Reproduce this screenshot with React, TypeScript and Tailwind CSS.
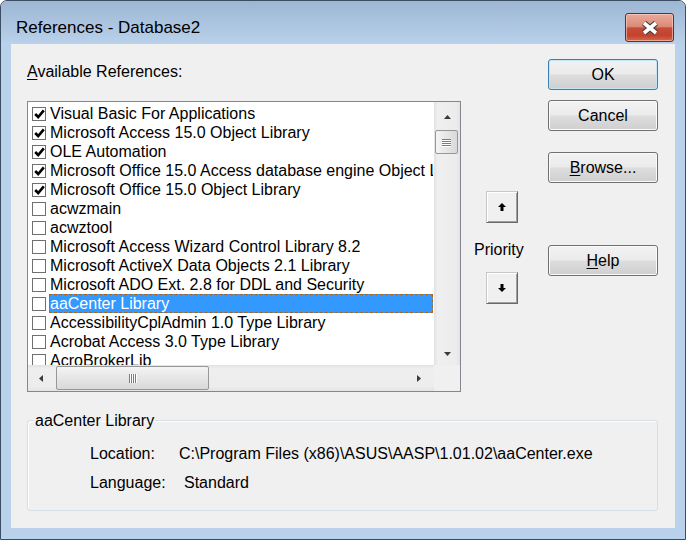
import React from 'react';

type Item = { label: string; checked: boolean; selected?: boolean };

const items: Item[] = [
  { label: 'Visual Basic For Applications', checked: true },
  { label: 'Microsoft Access 15.0 Object Library', checked: true },
  { label: 'OLE Automation', checked: true },
  { label: 'Microsoft Office 15.0 Access database engine Object Library', checked: true },
  { label: 'Microsoft Office 15.0 Object Library', checked: true },
  { label: 'acwzmain', checked: false },
  { label: 'acwztool', checked: false },
  { label: 'Microsoft Access Wizard Control Library 8.2', checked: false },
  { label: 'Microsoft ActiveX Data Objects 2.1 Library', checked: false },
  { label: 'Microsoft ADO Ext. 2.8 for DDL and Security', checked: false },
  { label: 'aaCenter Library', checked: false, selected: true },
  { label: 'AccessibilityCplAdmin 1.0 Type Library', checked: false },
  { label: 'Acrobat Access 3.0 Type Library', checked: false },
  { label: 'AcroBrokerLib', checked: false },
];

function Arrow({ dir }: { dir: 'up' | 'down' | 'left' | 'right' }) {
  const pts = {
    up: '0,4 3.5,0 7,4',
    down: '0,0 7,0 3.5,4',
    left: '4,0 4,7 0,3.5',
    right: '0,0 4,3.5 0,7',
  }[dir];
  const vertical = dir === 'up' || dir === 'down';
  return (
    <svg width={vertical ? 7 : 4} height={vertical ? 4 : 7} viewBox={vertical ? '0 0 7 4' : '0 0 4 7'}>
      <polygon points={pts} fill="#3a3a3a" />
    </svg>
  );
}

function CheckBox({ checked }: { checked: boolean }) {
  return (
    <div className="w-[14px] h-[14px] shrink-0 border border-[#6f6f6f] bg-white flex items-center justify-center">
      {checked && (
        <svg width="11" height="10" viewBox="0 0 11 10">
          <path d="M1.2 5 L4.2 8 L9.8 1.3" stroke="#000" strokeWidth="2.6" fill="none" />
        </svg>
      )}
    </div>
  );
}

function WinButton({ children, primary }: { children: React.ReactNode; primary?: boolean }) {
  return (
    <div
      className={
        'h-[31px] w-[110px] rounded-[3px] border flex items-center justify-center text-black ' +
        'bg-[linear-gradient(#f2f2f2,#ebebeb_48%,#dddddd_52%,#cfcfcf)] ' +
        (primary
          ? 'border-[#3c7fb1] shadow-[inset_0_0_0_1px_#c4e5f6]'
          : 'border-[#707070] shadow-[inset_0_0_0_1px_#fbfbfb]')
      }
    >
      {children}
    </div>
  );
}

function PriorityButton({ dir }: { dir: 'up' | 'down' }) {
  return (
    <div className="w-[32px] h-[32px] bg-[#f0f0f0] border border-t-[#c8c8c8] border-l-[#c8c8c8] border-r-[#696969] border-b-[#696969] shadow-[inset_1px_1px_0_#ffffff,inset_-1px_-1px_0_#a0a0a0] flex items-center justify-center">
      <svg width="8" height="8" viewBox="0 0 8 8">
        {dir === 'up' ? (
          <polygon points="4,0 8,4 5.5,4 5.5,8 2.5,8 2.5,4 0,4" fill="#000" />
        ) : (
          <polygon points="2.5,0 5.5,0 5.5,4 8,4 4,8 0,4 2.5,4" fill="#000" />
        )}
      </svg>
    </div>
  );
}

function Gripper({ vertical }: { vertical: boolean }) {
  return vertical ? (
    <div className="flex flex-col gap-[1px]">
      {[0, 1, 2, 3].map((i) => (
        <div key={i} className="w-[9px] h-[1px] bg-[#7d7d7d] shadow-[0_1px_0_#ffffff]" />
      ))}
    </div>
  ) : (
    <div className="flex flex-row gap-[1px]">
      {[0, 1, 2, 3].map((i) => (
        <div key={i} className="h-[9px] w-[1px] bg-[#7d7d7d] shadow-[1px_0_0_#ffffff]" />
      ))}
    </div>
  );
}

export default function App() {
  return (
    <div className="w-[686px] h-[540px] flex flex-col rounded-t-[7px] border border-[#3b4d62] bg-[#b9d1ea] overflow-hidden font-['Liberation_Sans',Arial,sans-serif] text-[16px] leading-[19px] text-black">
      {/* title bar */}
      <div className="h-[43px] shrink-0 flex items-start bg-[linear-gradient(#9db6d3,#b9d1ea)]">
        <div className="ml-[15px] mt-[16px] h-[22px] leading-[22px] text-[17px] text-black">References - Database2</div>
        <div className="ml-auto mr-[11px] mt-[12px] w-[49px] h-[29px] rounded-[3px] border border-[#6b2b24] bg-[linear-gradient(#e9aa9b,#db8a78_46%,#c54c37_52%,#c3432d_80%,#d56a50)] shadow-[inset_0_0_0_1px_rgba(255,220,210,0.55)] flex items-center justify-center">
          <svg width="20" height="16" viewBox="0 0 20 16">
            <path d="M4 3 L16 13 M16 3 L4 13" stroke="#3e3e3e" strokeWidth="6" />
            <path d="M4 3 L16 13 M16 3 L4 13" stroke="#ffffff" strokeWidth="3.6" />
          </svg>
        </div>
      </div>

      {/* client */}
      <div className="mx-[10px] h-[484px] bg-[#f0f0f0] flex flex-col pl-[16px] pr-[17px]">
        <div className="flex flex-row">
          {/* list column */}
          <div className="w-[434px] flex flex-col">
            <div className="mt-[18px] h-[19px]">
              <span className="underline underline-offset-2">A</span>vailable References:
            </div>
            <div className="mt-[20px] h-[291px] border border-[#828790] bg-white grid grid-cols-[1fr_26px] grid-rows-[1fr_26px]">
              <div className="overflow-hidden pt-[2px]">
                {items.map((it) => (
                  <div key={it.label} className="h-[19px] flex items-center pl-[4px]">
                    <CheckBox checked={it.checked} />
                    <div
                      className={
                        'ml-[3px] mr-[1px] flex-1 min-w-0 h-[19px] whitespace-nowrap overflow-hidden ' +
                        (it.selected
                          ? 'bg-[#3399ff] text-white border border-dashed border-[#b5600c] leading-[17px]'
                          : 'pl-[1px]')
                      }
                    >
                      {it.label}
                    </div>
                  </div>
                ))}
              </div>

              {/* vertical scrollbar */}
              <div className="flex flex-col bg-[linear-gradient(90deg,#e2e2e2,#efefef_15%,#ececec_85%,#e4e4e4)]">
                <div className="h-[26px] flex items-center justify-center pt-[4px]">
                  <Arrow dir="up" />
                </div>
                <div className="mt-[2px] ml-[1px] w-[23px] h-[24px] rounded-[2px] border border-[#979797] bg-[linear-gradient(90deg,#f4f4f4,#e6e6e6_50%,#d9d9d9)] flex items-center justify-center">
                  <Gripper vertical />
                </div>
                <div className="flex-1" />
                <div className="h-[26px] flex items-center justify-center pt-[3px]">
                  <Arrow dir="down" />
                </div>
              </div>

              {/* horizontal scrollbar */}
              <div className="flex flex-row bg-[linear-gradient(#e2e2e2,#efefef_15%,#ececec_85%,#e4e4e4)]">
                <div className="w-[26px] flex items-center justify-center">
                  <Arrow dir="left" />
                </div>
                <div className="ml-[2px] my-[1px] w-[153px] rounded-[2px] border border-[#979797] bg-[linear-gradient(#f4f4f4,#e6e6e6_50%,#d9d9d9)] flex items-center justify-center">
                  <Gripper vertical={false} />
                </div>
                <div className="flex-1" />
                <div className="w-[26px] flex items-center justify-center pr-[4px]">
                  <Arrow dir="right" />
                </div>
              </div>
              <div className="bg-[#f0f0f0]" />
            </div>
          </div>

          {/* priority column */}
          <div className="w-[87px] flex flex-col pt-[147px]">
            <div className="ml-[25px]">
              <PriorityButton dir="up" />
            </div>
            <div className="ml-[13px] mt-[17px] h-[19px]">Priority</div>
            <div className="ml-[25px] mt-[13px]">
              <PriorityButton dir="down" />
            </div>
          </div>

          {/* buttons column */}
          <div className="w-[110px] flex flex-col pt-[15px]">
            <WinButton primary>OK</WinButton>
            <div className="mt-[10px]">
              <WinButton>Cancel</WinButton>
            </div>
            <div className="mt-[21px]">
              <WinButton>
                <span>
                  <span className="underline underline-offset-2">B</span>rowse...
                </span>
              </WinButton>
            </div>
            <div className="mt-[62px]">
              <WinButton>
                <span>
                  <span className="underline underline-offset-2">H</span>elp
                </span>
              </WinButton>
            </div>
          </div>
        </div>

        {/* group box */}
        <fieldset className="mt-[19px] h-[100px] rounded-[3px] border border-[#d5dfe5] shadow-[inset_1px_1px_0_#ffffff]">
          <legend className="ml-[6px] px-[1px] h-[19px]">aaCenter Library</legend>
          <div className="pl-[62px] pt-[14px] flex flex-col gap-[10px]">
            <div className="flex h-[19px]">
              <div className="w-[89px]">Location:</div>
              <div>C:\Program Files (x86)\ASUS\AASP\1.01.02\aaCenter.exe</div>
            </div>
            <div className="flex h-[19px]">
              <div className="w-[94px]">Language:</div>
              <div>Standard</div>
            </div>
          </div>
        </fieldset>
      </div>
    </div>
  );
}
